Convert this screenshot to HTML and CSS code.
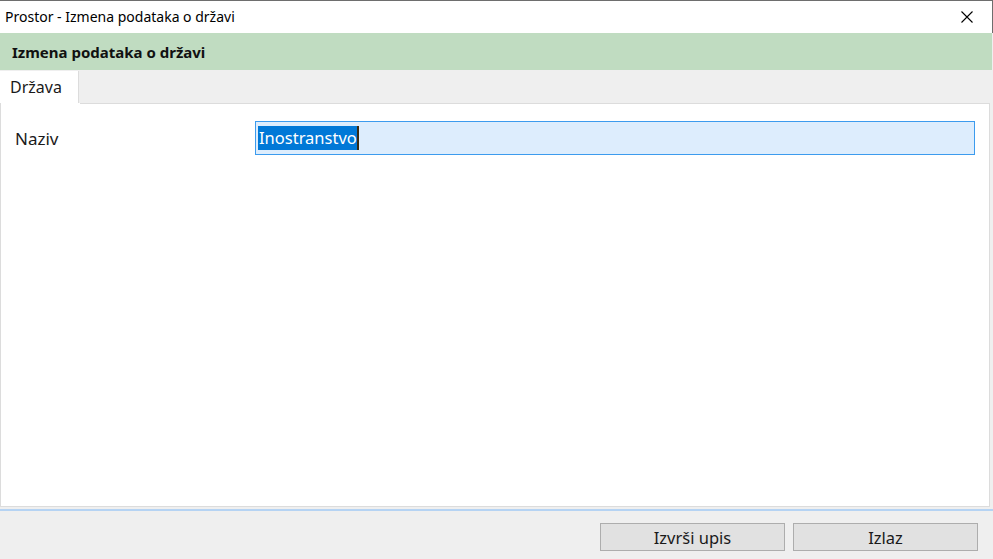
FILE: index.html
```html
<!DOCTYPE html>
<html lang="sr">
<head>
  <meta charset="UTF-8">
  <title>Prostor - Izmena podataka o državi</title>
  <link rel="stylesheet" href="styles.css">
</head>
<body>
  <div class="window">
    <div class="titlebar">
      <span class="title">Prostor - Izmena podataka o državi</span>
      <span class="close">
        <svg width="12" height="12" viewBox="0 0 12 12"><path d="M0.5 0.5L11.5 11.5M11.5 0.5L0.5 11.5" stroke="#000" stroke-width="1.1" fill="none"/></svg>
      </span>
    </div>

    <div class="form-header">Izmena podataka o državi</div>

    <div class="tabs">
      <div class="tab active">Država</div>
    </div>

    <div class="panel">
      <div class="field">
        <label class="field-label">Naziv</label>
        <div class="field-input"><span class="selected">Inostranstvo</span><span class="caret"></span></div>
      </div>
    </div>

    <div class="footer">
      <button class="btn">Izvrši upis</button>
      <button class="btn">Izlaz</button>
    </div>
  </div>
</body>
</html>
```

FILE: styles.css
```css
:root {
  --window-border: #6e6e6e;
  --green: #c0dcc1;
  --gray-bg: #efefef;
  --panel-border: #dcdcdc;
  --input-bg: #ddedfd;
  --input-border: #3c9bee;
  --select: #0078d7;
  --btn-bg: #e1e1e1;
  --btn-border: #adadad;
}

body {
  margin: 0;
  font-family: "Noto Sans", "Open Sans", sans-serif;
  color: #1a1a1a;
  background: #fff;
}

.window {
  width: 993px;
  height: 559px;
  display: flex;
  flex-direction: column;
  background: var(--gray-bg);
}

.titlebar {
  height: 32px;
  border-top: 1px solid var(--window-border);
  border-right: 1px solid var(--window-border);
  background: #fff;
  display: flex;
  align-items: center;
  justify-content: space-between;
  padding-left: 5px;
  font-size: 14px;
  color: #000;
}

.title {
  position: relative;
  top: -1px;
}

.close {
  display: flex;
  width: 46px;
  height: 32px;
  align-items: center;
  justify-content: center;
  margin-right: 2px;
}

.form-header {
  height: 37px;
  background: var(--green);
  display: flex;
  align-items: center;
  padding-left: 12px;
  font-size: 15px;
  font-weight: bold;
  color: #111;
  margin-right: 1px;
}

.tabs {
  height: 33px;
  display: flex;
  margin-right: 3px;
}

.tab {
  width: 68px;
  padding-left: 10px;
  display: flex;
  align-items: center;
  font-size: 16px;
  background: #fff;
  border-right: 1px solid var(--panel-border);
  margin-top: 1px;
}

.panel {
  height: 403px;
  background: #fff;
  border: 1px solid var(--panel-border);
  border-top: none;
  margin-right: 3px;
  position: relative;
}

.panel::before {
  content: "";
  position: absolute;
  top: 0;
  left: 79px;
  right: 0;
  border-top: 1px solid var(--panel-border);
}

.field {
  display: flex;
  align-items: center;
  padding-top: 18px;
}

.field-label {
  width: 240px;
  padding-left: 14px;
  font-size: 17px;
  color: #1a1a1a;
}

.field-input {
  width: 714px;
  height: 28px;
  padding: 2px 2px;
  background: var(--input-bg);
  border: 1px solid var(--input-border);
  display: flex;
  align-items: center;
  font-size: 16.5px;
}

.selected {
  background: var(--select);
  color: #fff;
  padding: 0 0 0 1px;
  line-height: 24px;
}

.caret {
  width: 2px;
  height: 24px;
  background: #3a2a10;
}

.footer {
  flex: 1;
  border-top: 2px solid #b5d3f3;
  margin-top: 2px;
  display: flex;
  justify-content: flex-end;
  align-items: flex-start;
  gap: 8px;
  padding-top: 12px;
  padding-right: 15px;
}

.btn {
  width: 185px;
  height: 28px;
  background: var(--btn-bg);
  border: 1px solid var(--btn-border);
  font-family: "Noto Sans", "Open Sans", sans-serif;
  font-size: 16.5px;
  color: #1a1a1a;
  padding: 0;
}
```
